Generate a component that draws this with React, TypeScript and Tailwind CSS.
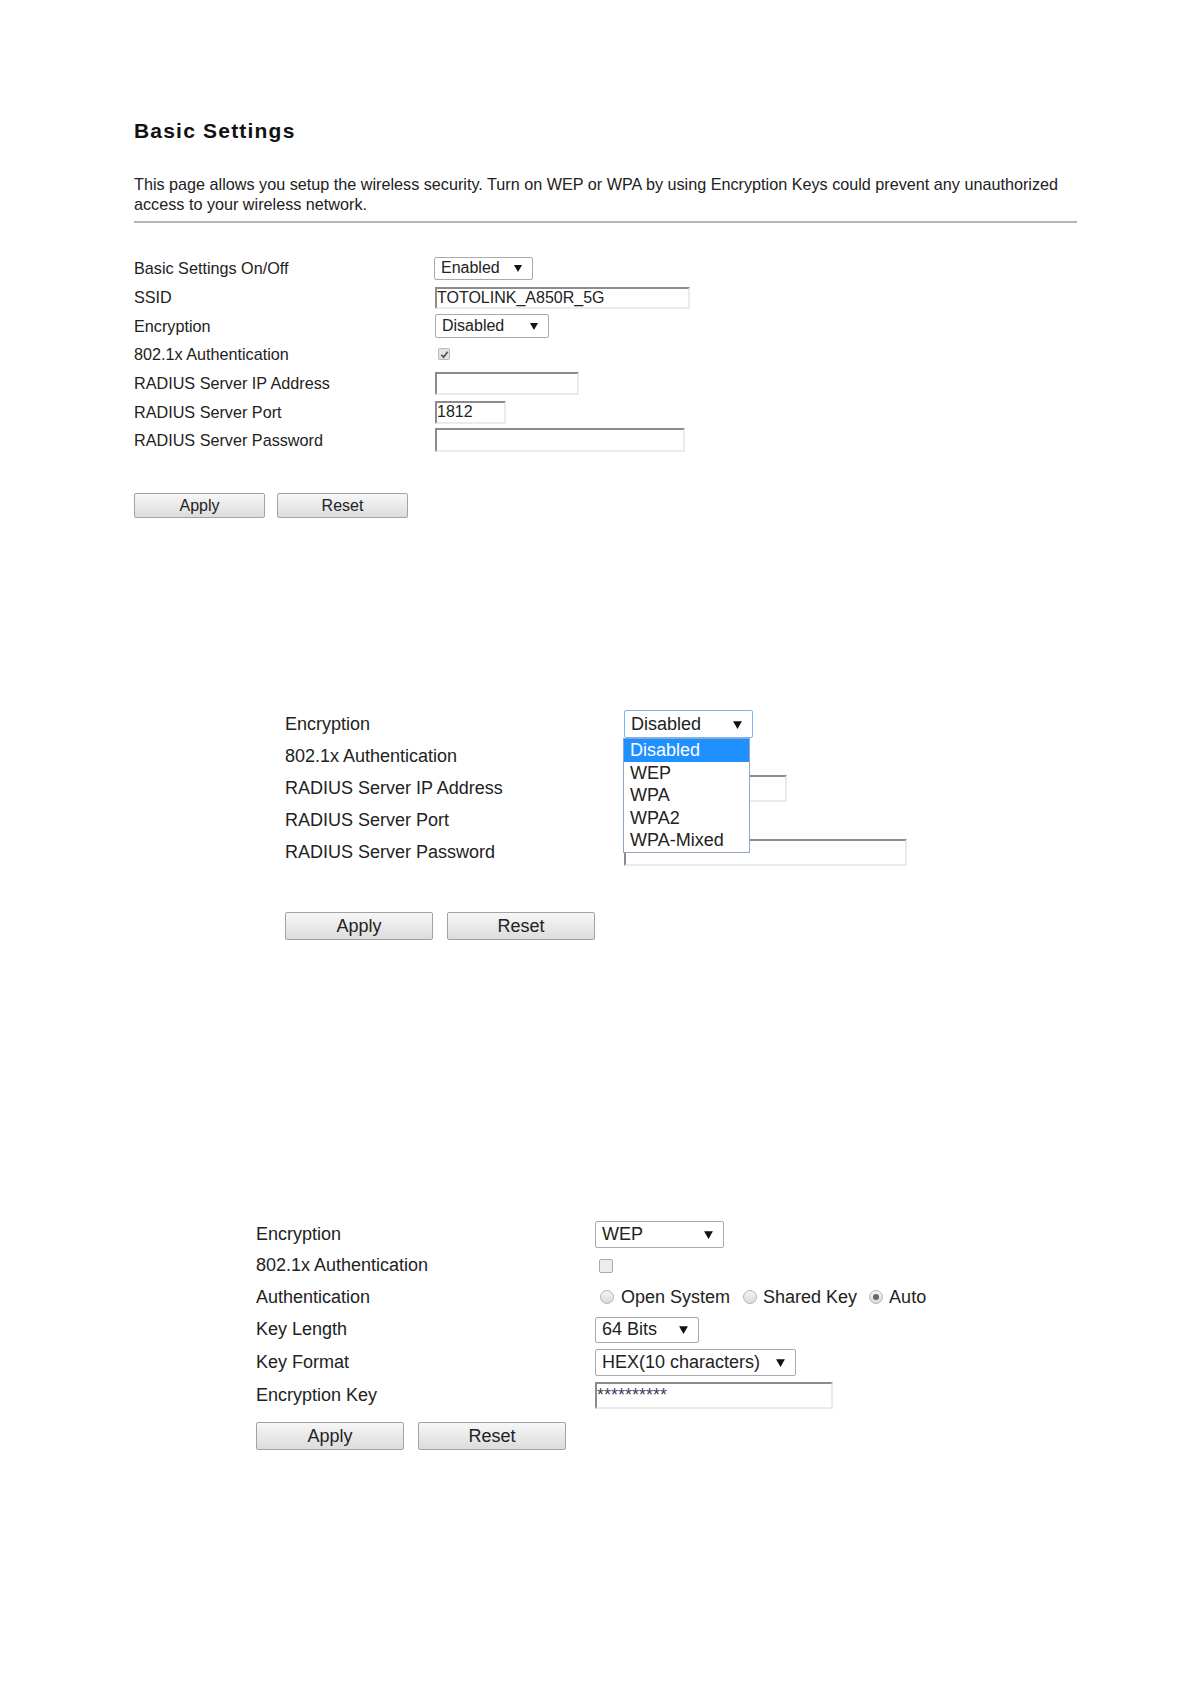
import React from "react";

// flèche des listes déroulantes
function Arrow({ size }: { size: number }) {
  return (
    <svg width={size} height={size} viewBox="0 0 10 10" className="shrink-0">
      <path d="M1 2 L9 2 L5 9 Z" fill="#111" />
    </svg>
  );
}

function Select({ value, className, arrow = 10, focus = false }: { value: string; className: string; arrow?: number; focus?: boolean }) {
  return (
    <div
      className={`flex items-center justify-between rounded-[2px] border bg-white ${focus ? "border-[#7eb4ea]" : "border-[#a9a9a9]"} ${className}`}
    >
      <span className="whitespace-nowrap">{value}</span>
      <Arrow size={arrow} />
    </div>
  );
}

function TextInput({ value = "", className }: { value?: string; className: string }) {
  return (
    <div
      className={`flex items-center overflow-hidden whitespace-nowrap border-2 border-t-[#8c8c8c] border-l-[#8c8c8c] border-r-[#ebebeb] border-b-[#ebebeb] bg-white ${className}`}
    >
      {value}
    </div>
  );
}

function Btn({ label, className }: { label: string; className: string }) {
  return (
    <div
      className={`flex items-center justify-center rounded-[2px] border border-[#a3a3a3] bg-gradient-to-b from-[#f7f7f7] to-[#dcdcdc] text-[#222] ${className}`}
    >
      {label}
    </div>
  );
}

function Radio({ checked = false }: { checked?: boolean }) {
  return (
    <span className="flex h-[14px] w-[14px] items-center justify-center rounded-full border border-[#b4b4b4] bg-gradient-to-b from-[#f4f4f4] to-[#dadada]">
      {checked && <span className="h-[6px] w-[6px] rounded-full bg-[#666]" />}
    </span>
  );
}

export default function App() {
  return (
    <div className="min-h-[1684px] w-[1191px] bg-white font-['Liberation_Sans',Arial,sans-serif] text-[#222]">
      {/* Bloc 1 : page complète */}
      <section className="ml-[134px] w-[943px] pt-[119px]">
        <h1 className="text-[21px] font-bold leading-[24px] tracking-[1.2px] text-[#111]">Basic Settings</h1>
        <p className="mt-[31px] text-[16.2px] leading-[20px]">
          This page allows you setup the wireless security. Turn on WEP or WPA by using Encryption Keys could prevent any unauthorized
          <br />
          access to your wireless network.
        </p>
        <div className="mt-[7px] h-[2px] bg-[#b4b4b4]" />

        <div className="mt-[30px] grid grid-cols-[300px_1fr] text-[16.2px]">
          <div className="flex h-[30px] items-center">Basic Settings On/Off</div>
          <div className="flex h-[30px] items-center">
            <Select value="Enabled" className="h-[23px] w-[99px] pl-[6px] pr-[9px] text-[16px]" />
          </div>

          <div className="flex h-[29px] items-center">SSID</div>
          <div className="flex h-[29px] items-center pl-[1px]">
            <TextInput value="TOTOLINK_A850R_5G" className="h-[22px] w-[255px] text-[16px]" />
          </div>

          <div className="flex h-[28px] items-center">Encryption</div>
          <div className="flex h-[28px] items-center pl-[1px]">
            <Select value="Disabled" className="h-[24px] w-[114px] pl-[6px] pr-[9px] text-[16px]" />
          </div>

          <div className="flex h-[28px] items-center">802.1x Authentication</div>
          <div className="flex h-[28px] items-center pl-[4px]">
            <span className="flex h-[12px] w-[12px] items-center justify-center rounded-[2px] border border-[#b9b9b9] bg-[#e4e4e4]">
              <svg width="9" height="9" viewBox="0 0 10 10">
                <path d="M1.5 5.5 L4 8 L8.5 2" stroke="#555" strokeWidth="2" fill="none" />
              </svg>
            </span>
          </div>

          <div className="flex h-[30px] items-center">RADIUS Server IP Address</div>
          <div className="flex h-[30px] items-center pl-[1px]">
            <TextInput className="h-[23px] w-[144px]" />
          </div>

          <div className="flex h-[28px] items-center">RADIUS Server Port</div>
          <div className="flex h-[28px] items-center pl-[1px]">
            <TextInput value="1812" className="h-[23px] w-[71px] text-[16px]" />
          </div>

          <div className="flex h-[28px] items-center">RADIUS Server Password</div>
          <div className="flex h-[28px] items-center pl-[1px]">
            <TextInput className="h-[24px] w-[250px]" />
          </div>
        </div>

        <div className="mt-[39px] flex gap-[12px] text-[16px]">
          <Btn label="Apply" className="h-[25px] w-[131px]" />
          <Btn label="Reset" className="h-[25px] w-[131px]" />
        </div>
      </section>

      {/* Bloc 2 : liste Encryption ouverte */}
      <section className="ml-[285px] mt-[190px] text-[18px]">
        <div className="grid grid-cols-[339px_1fr]">
          <div className="flex h-[32px] items-center">Encryption</div>
          <div className="flex h-[32px] items-center">
            <div className="relative">
              <Select value="Disabled" focus className="h-[28px] w-[129px] pl-[6px] pr-[9px] text-[18px]" arrow={11} />
              <div className="absolute left-[-1px] top-[28px] z-10 w-[127px] border border-[#8fa6c4] bg-white text-[18px] leading-[22.6px]">
                <div className="bg-[#1e90ff] pl-[6px] text-white">Disabled</div>
                <div className="pl-[6px]">WEP</div>
                <div className="pl-[6px]">WPA</div>
                <div className="pl-[6px]">WPA2</div>
                <div className="pl-[6px]">WPA-Mixed</div>
              </div>
            </div>
          </div>

          <div className="flex h-[32px] items-center">802.1x Authentication</div>
          <div className="flex h-[32px] items-center pl-[4px]">
            <span className="h-[13px] w-[13px] rounded-[2px] border border-[#aaa] bg-[#eee]" />
          </div>

          <div className="flex h-[32px] items-center">RADIUS Server IP Address</div>
          <div className="flex h-[32px] items-center">
            <TextInput className="h-[27px] w-[163px]" />
          </div>

          <div className="flex h-[32px] items-center">RADIUS Server Port</div>
          <div className="flex h-[32px] items-center">
            <TextInput className="h-[27px] w-[96px]" />
          </div>

          <div className="flex h-[32px] items-center">RADIUS Server Password</div>
          <div className="flex h-[32px] items-center">
            <TextInput className="h-[27px] w-[283px]" />
          </div>
        </div>

        <div className="mt-[44px] flex gap-[14px]">
          <Btn label="Apply" className="h-[28px] w-[148px]" />
          <Btn label="Reset" className="h-[28px] w-[148px]" />
        </div>
      </section>

      {/* Bloc 3 : WEP */}
      <section className="ml-[256px] mt-[278px] text-[18px]">
        <div className="grid grid-cols-[339px_1fr]">
          <div className="flex h-[32px] items-center">Encryption</div>
          <div className="flex h-[32px] items-center">
            <Select value="WEP" className="h-[27px] w-[129px] pl-[6px] pr-[9px] text-[18px]" arrow={11} />
          </div>

          <div className="flex h-[31px] items-center">802.1x Authentication</div>
          <div className="flex h-[31px] items-center pl-[4px]">
            <span className="h-[14px] w-[14px] rounded-[2px] border border-[#aaa] bg-[#ececec]" />
          </div>

          <div className="flex h-[32px] items-center">Authentication</div>
          <div className="flex h-[32px] items-center pl-[5px]">
            <Radio />
            <span className="ml-[7px]">Open System</span>
            <span className="ml-[13px]">
              <Radio />
            </span>
            <span className="ml-[6px]">Shared Key</span>
            <span className="ml-[12px]">
              <Radio checked />
            </span>
            <span className="ml-[6px]">Auto</span>
          </div>

          <div className="flex h-[33px] items-center">Key Length</div>
          <div className="flex h-[33px] items-center">
            <Select value="64 Bits" className="h-[26px] w-[104px] pl-[6px] pr-[9px] text-[18px]" arrow={11} />
          </div>

          <div className="flex h-[33px] items-center">Key Format</div>
          <div className="flex h-[33px] items-center">
            <Select value="HEX(10 characters)" className="h-[27px] w-[201px] pl-[6px] pr-[9px] text-[18px]" arrow={11} />
          </div>

          <div className="flex h-[32px] items-center">Encryption Key</div>
          <div className="flex h-[32px] items-center">
            <TextInput value="**********" className="h-[27px] w-[238px] text-[18px] text-[#4a3a60]" />
          </div>
        </div>

        <div className="mt-[11px] flex gap-[14px]">
          <Btn label="Apply" className="h-[28px] w-[148px]" />
          <Btn label="Reset" className="h-[28px] w-[148px]" />
        </div>
      </section>
    </div>
  );
}
